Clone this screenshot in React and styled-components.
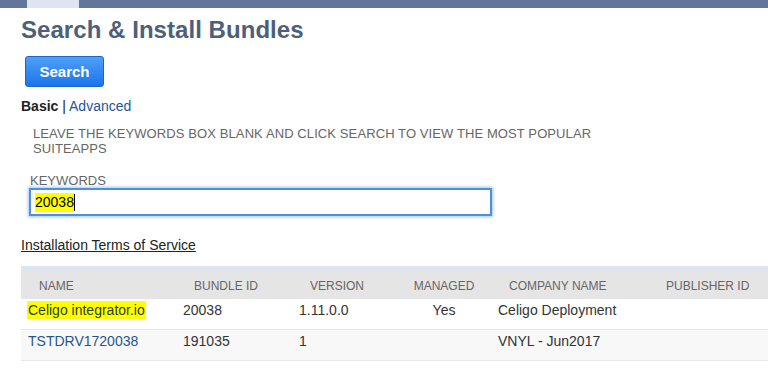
import React from "react";
import styled, { createGlobalStyle } from "styled-components";

const GlobalStyle = createGlobalStyle`
  html, body {
    margin: 0;
    padding: 0;
    background: #fff;
    font-family: "Liberation Sans", Arial, sans-serif;
    overflow: hidden;
  }
`;

const TopBar = styled.div`
  height: 8px;
  background: #607799;
  display: flex;
  padding-left: 27px;
`;

const ActiveTab = styled.div`
  width: 52px;
  background: #dfe5ef;
`;

const Page = styled.div`
  padding-left: 21px;
`;

const Title = styled.h1`
  margin: 8px 0 0;
  font-size: 24px;
  line-height: 28px;
  font-weight: bold;
  color: #4d5f7a;
  letter-spacing: 0.05px;
`;

const SearchButton = styled.button`
  margin: 12px 0 0 4px;
  width: 79px;
  height: 31px;
  border: 1px solid #1f63c6;
  border-radius: 3px;
  background: linear-gradient(#4fa0fb, #1b74e9);
  color: #fff;
  font-family: "Liberation Sans", Arial, sans-serif;
  font-size: 15px;
  font-weight: bold;
  padding: 0;
`;

const ModeSwitch = styled.div`
  margin-top: 10px;
  font-size: 14px;
  line-height: 18px;
  color: #222;

  b {
    font-weight: bold;
  }
`;

const Link = styled.a`
  color: ${(p) => p.$color || "#255599"};
  text-decoration: ${(p) => (p.$underline ? "underline" : "none")};
`;

const Hint = styled.p`
  margin: 11px 0 0 12px;
  width: 590px;
  font-size: 13px;
  line-height: 15px;
  color: #666;
  text-transform: uppercase;
  letter-spacing: 0.1px;
`;

const Field = styled.div`
  margin: 17px 0 0 8px;
`;

const Label = styled.div`
  font-size: 13px;
  line-height: 15px;
  color: #666;
  padding-left: 1px;
  text-transform: uppercase;
`;

const InputBox = styled.div`
  box-sizing: border-box;
  width: 463px;
  height: 28px;
  border: 2px solid #4d90e0;
  box-shadow: 0 0 3px 1px rgba(90, 150, 230, 0.55);
  display: flex;
  align-items: center;
  padding-left: 4px;
  font-size: 14px;
  color: #000;
`;

const Mark = styled.span`
  background: #ffff00;
  line-height: 19px;
`;

const Caret = styled.span`
  display: inline-block;
  width: 1px;
  height: 17px;
  background: #000;
`;

const Terms = styled.div`
  margin-top: 20px;
  font-size: 14px;
  line-height: 18px;
`;

const Table = styled.div`
  margin-top: 12px;
  border-top: 6px solid #e0e6ef;
  width: 760px;
`;

const Row = styled.div`
  display: grid;
  grid-template-columns: 155px 116px 105px 94px 157px 1fr;
  height: ${(p) => (p.$head ? "27px" : "30px")};
  background: ${(p) => p.$bg};
  border-bottom: ${(p) => (p.$head ? "none" : "1px solid #e6e6e6")};
`;

const HeadCell = styled.div`
  display: flex;
  align-items: center;
  justify-content: ${(p) => (p.$center ? "center" : "flex-start")};
  padding-left: ${(p) => (p.$center ? "0" : "18px")};
  font-size: 12px;
  color: #666;
  text-transform: uppercase;
`;

const Cell = styled.div`
  padding: 3px 0 0 ${(p) => (p.$center ? "0" : "7px")};
  text-align: ${(p) => (p.$center ? "center" : "left")};
  font-size: 14px;
  line-height: 16px;
  color: ${(p) => p.$color || "#333"};
`;

const Highlight = styled.span`
  background: #ffff00;
  padding: 1px 1px;
  margin-left: -1px;
`;

const columns = ["Name", "Bundle ID", "Version", "Managed", "Company Name", "Publisher ID"];

const bundles = [
  { name: "Celigo integrator.io", id: "20038", version: "1.11.0.0", managed: "Yes", company: "Celigo Deployment", hit: true },
  { name: "TSTDRV1720038", id: "191035", version: "1", managed: "", company: "VNYL - Jun2017", hit: false },
];

export default function App() {
  return (
    <>
      <GlobalStyle />
      <TopBar>
        <ActiveTab />
      </TopBar>
      <Page>
        <Title>Search &amp; Install Bundles</Title>
        <SearchButton>Search</SearchButton>
        <ModeSwitch>
          <b>Basic</b> | <Link>Advanced</Link>
        </ModeSwitch>
        <Hint>
          Leave the keywords box blank and click search to view the most popular SuiteApps
        </Hint>
        <Field>
          <Label>Keywords</Label>
          <InputBox>
            <Mark>20038</Mark>
            <Caret />
          </InputBox>
        </Field>
        <Terms>
          <Link $color="#222" $underline>Installation Terms of Service</Link>
        </Terms>
        <Table>
          <Row $head $bg="#e5e5e5">
            {columns.map((c) => (
              <HeadCell key={c} $center={c === "Managed"}>{c}</HeadCell>
            ))}
          </Row>
          {bundles.map((b, i) => (
            <Row key={b.id} $bg={i % 2 ? "#f8f8f8" : "#fff"}>
              <Cell $color={b.hit ? "#2a3f1a" : "#255599"}>
                {b.hit ? <Highlight>{b.name}</Highlight> : b.name}
              </Cell>
              <Cell>{b.id}</Cell>
              <Cell>{b.version}</Cell>
              <Cell $center>{b.managed}</Cell>
              <Cell>{b.company}</Cell>
              <Cell />
            </Row>
          ))}
        </Table>
      </Page>
    </>
  );
}
